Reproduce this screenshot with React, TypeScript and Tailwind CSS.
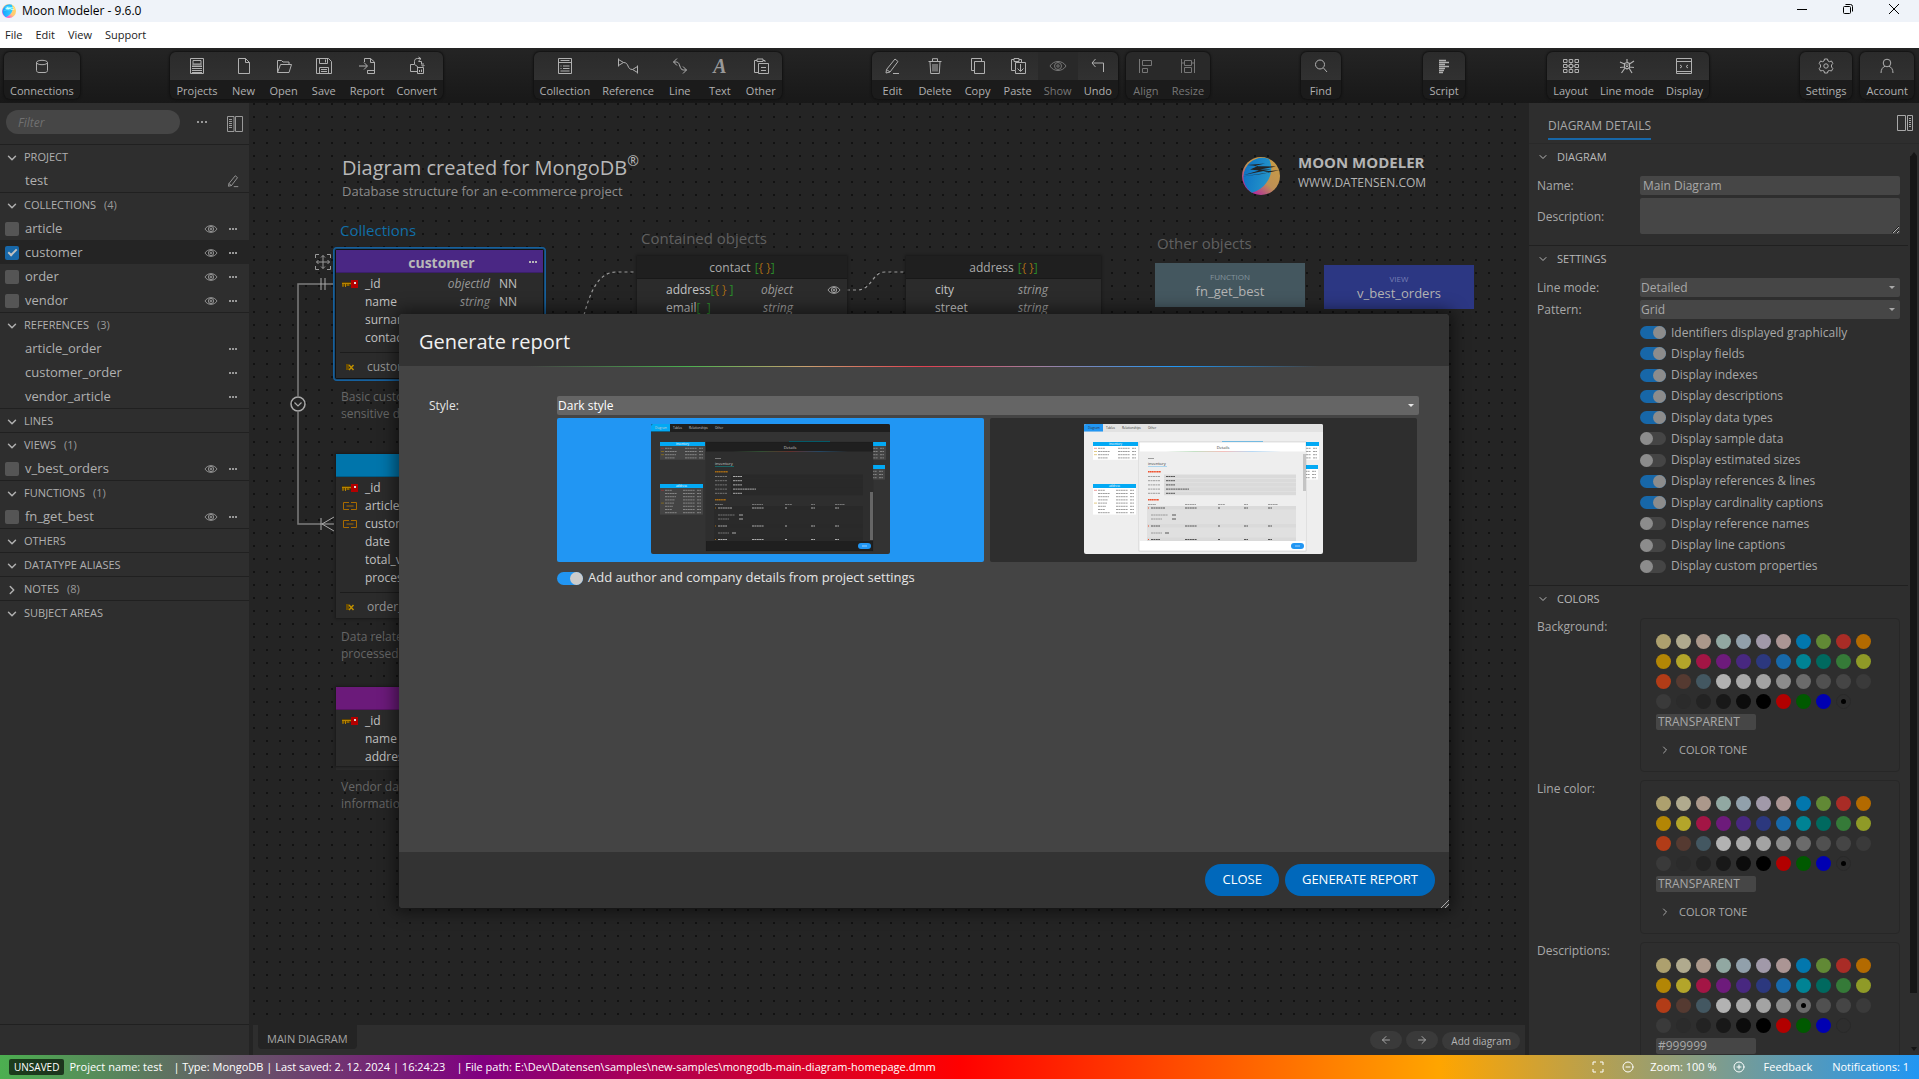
import type { ReactNode } from 'react';
import { ArrowLeft, ArrowRight, ChevronDown, ChevronRight, CircleMinus, CirclePlus } from 'lucide-react';

const ICONS: Record<string, ReactNode> = {
  connections: <><ellipse cx="8" cy="4.5" rx="5.5" ry="2.2" /><path d="M2.500 4.500v8c0 1.200 1.200 2 2.500 2h6c1.300 0 2.500-.8 2.500-2v-8" /></>,
  projects: <><path d="M1.500.500h13v15h-13zM4 2.500h8v3.500H4zM3 8.500h10M3 10.500h10M3 12.500h10M3 14.500h10M3 7h10" /></>,
  new: <path d="M2.500.500h7l4 4v11h-11zM9.500.500v4h4" />,
  open: <path d="M1.500 14.500v-12h4l1.500 1.500h6v3M1.500 14.500l3-8h11l-2.500 8z" />,
  save: <path d="M.500.500h12l3 3v12H.500zM3.500.500v5h8v-5M9.500 1.500v3M3.500 15.500v-6h9v6M5 11.500h6M5 13.500h6" />,
  report: <path d="M5.500 4V.500h6l4 3.500v11.500h-7v-3h7M11.500.500v4h4M0 8h8M5 4.500L8.500 8 5 11.500M8.500 12.500V15" />,
  convert: <path d="M5.500 6V3.500c0-2 1-3 3-3h3M9.500-1L12 .7 9.500 3M9.500 3.500h3v3M1.500 6.500h4l3 2v5h-7zM8.500 9.500h6v6h-6zM10.500 12v2M12.500 11.500V14M14 5v3M12.500 7l1.500 1.500L15.500 7" />,
  collection: <path d="M1.500.500h13v15h-13zM1.500 4.500h13M3.500 2.500h9M3.500 8h1M6 8h6.500M3.500 10.500h1M6 10.500h6.500M3.500 13h9" />,
  reference: <path d="M-1.500.500v8M-1.500 1.500l5 3-5 3M3.500 4.500c6 0 3 7 9 7M17.500 7.500v8M17.500 8.500l-5 3 5 3" />,
  line: <path d="M5 .500L1.500 4 5 7.500M1.500 4h3c4 0 2.500 8 7 8h3M11 8.500l3.500 3.500-3.500 3.500" />,
  other: <path d="M5 14.500H1.500v-12H4M10 2.500h2V4M4 1h6v2.500H4zM5.500 5.500h10v10h-10zM8 9.500h5M8 12.500h5" />,
  edit: <path d="M2.500 11.500L11 1l3 2.500L6 14l-4 1zM2.500 11.500L6 14M9 15.500h6" />,
  delete: <path d="M1.500 3.500h13M5.500 3V.700h5V3M3 4l.7 11.500h8.600L13 4M6 6v7.500M8 6v7.500M10 6v7.500" />,
  copy: <path d="M4.500 12.500h-3v-12h10v3M4.500 3.500h10v12h-10z" />,
  paste: <path d="M5 12.500H1.500v-11H4M9 1.500h2.500v3M4 .500h5v3H4zM5.500 12.500v-8h10v11h-10v-3M10.500 6v7M7.500 10.500l3 3 3-3" />,
  eye: <><path d="M0 8c3.500-6 12.500-6 16 0-3.500 6-12.500 6-16 0z" /><circle cx="8" cy="8" r="3.500" /><circle cx="8" cy="8" r="1.200" /></>,
  undo: <path d="M5.500 1L2 5l3.500 4M2 5h11.500v9" />,
  align: <path d="M1.500 1v14M4.500 2.500h9v5h-9zM4.500 10.500h5v4h-5z" />,
  resize: <path d="M1.500 1v14M14.500 1v14M4.500 2.500h7v5h-7zM4.500 9.500h7v5h-7zM1.500 5h3M11.500 5h3" />,
  find: <><circle cx="7" cy="6.500" r="4.500" /><path d="M10.500 10l3.500 4" /></>,
  script: <path d="M3 2.500h7M3 4.500h10M3 6.500h6M3 8.500h10M3 10.500h6M3 12.500h5M3 14.500h4" strokeWidth="1.300" />,
  layout: <path d="M.500 1.500h3.500v3H.500zM6.200 1.500h3.500v3H6.200zM12 1.500h3.500v3H12zM.500 6.500h3.500v3H.500zM6.200 6.500h3.500v3H6.200zM12 6.500h3.500v3H12zM.500 11.500h3.500v3H.500zM6.200 11.500h3.500v3H6.200zM12 11.500h3.500v3H12zM4 8h2M10 8h2M8 4.500v2M8 9.500v2" />,
  lineMode: <path d="M5.500 5.500l2.500-1 2.500 1v4L8 11 5.500 9.500zM8 1v3.500M5.500 6L1 4M10.500 6L15 3M5.500 9L1 9.500M10.500 9l4.500.5M6 10l-3.500 5M10 10l3 5M6.500 7h3M7 8.500h2" strokeWidth="1.200" />,
  display: <path d="M.500.500h15v15H.500zM.500 3.500h15M.500 13.500h15M4 7l2 1.500L4 10M12 7l-2 1.500 2 1.500" />,
  settings: <><circle cx="8" cy="8" r="2.200" /><path d="M6.500 1h3l.5 2 1.500.7 2-.7 1.300 2.500-1.300 1.500v2l1.300 1.500-1.300 2.500-2-.5L10 13l-.5 2h-3L6 13l-1.500-.5-2 .5-1.300-2.500L2.500 9V7L1.200 5.500 2.500 3l2 .7L6 3z" /></>,
  account: <><circle cx="8" cy="5" r="3.800" /><path d="M2 15c0-4 2-6 4-6.700M14 15c0-4-2-6-4-6.700" /></>,
  move: <path d="M8 1.500v13M1.500 8h13M6 3.500l2-2 2 2M6 12.500l2 2 2-2M3.500 6l-2 2 2 2M12.500 6l2 2-2 2M.500 4V.500H4M12 .500h3.500V4M.500 12v3.500H4M12 15.500h3.500V12" />,
  panelLeft: <path d="M.500.500h6.500v15H.500zM8.500.500h7v15h-7zM2 3.500h3M2 5.500h3M2 7.500h3M2 9.500h3M2 11.500h3" />,
  panelRight: <path d="M.500.500h8v15h-8zM10.500.500h5v15h-5zM12 3.500h2M12 5.500h2M12 7.500h2M12 9.500h2M12 11.500h2" />,
  full: <path d="M3 6V3h3M10 3h3v3M3 10v3h3M10 13h3v-3" />,
};

function Icon({ name, className = 'size-4' }: { name: string; className?: string }) {
  return (
    <svg viewBox="0 0 16 16" className={`shrink-0 overflow-visible ${className}`} fill="none" stroke="currentColor" strokeWidth="1" aria-hidden="true">
      {ICONS[name]}
    </svg>
  );
}

function MoonLogo({ className, cut }: { className: string; cut: string }) {
  return (
    <svg viewBox="0 0 38 38" className={className} aria-hidden="true">
      <defs>
        <linearGradient id="moonWarm" x1="0.2" y1="1" x2="0.9" y2="0.2">
          <stop offset="0.1" stopColor="#b32d9b" />
          <stop offset="0.5" stopColor="#bd9055" />
          <stop offset="1" stopColor="#c79a46" />
        </linearGradient>
        <linearGradient id="moonBlue" x1="0" y1="0" x2="1" y2="0.3">
          <stop offset="0" stopColor="#0b6fc4" />
          <stop offset="1" stopColor="#2494c9" />
        </linearGradient>
      </defs>
      <circle cx="19" cy="19" r="19" fill="url(#moonWarm)" />
      <path d="M27 2C33 14 27 30 10 35.700A19 19 0 0 1 27 2z" fill="url(#moonBlue)" />
      <path d="M5 8l18-1.500-11 2.500 22 .5-16 3 11 0L2 18l15-4.500-9-1L16 9z" fill={cut} />
      <path d="M0 19.500l20-2.500 18-4-17 1.500 6 1z" fill={cut} />
    </svg>
  );
}

type Tool = { label: string; icon: string; dim?: boolean };

function ToolGroup({ tools }: { tools: Tool[] }) {
  return (
    <div className="flex overflow-hidden rounded-md bg-[#1b1b1b] shadow-[0_0_2px_1px_#111]">
      {tools.map((t) => (
        <button key={t.label} type="button" className={`flex min-w-10 flex-col items-center text-[11px] leading-4 ${t.dim ? 'text-[#777]' : 'text-[#b0b0b0]'}`}>
          <span className={`flex h-7 w-full items-center justify-center ${t.dim ? 'bg-[#292929]' : 'bg-linear-to-b from-[#2b2b2b] to-[#313131]'}`}>
            {t.icon === 'text' ? (
              <span className="font-['Liberation_Serif',serif] text-[20px] leading-7 font-bold text-[#999] italic">A</span>
            ) : (
              <Icon name={t.icon} />
            )}
          </span>
          <span className="px-[6px] pt-[3px]">{t.label}</span>
        </button>
      ))}
    </div>
  );
}

function Toolbar() {
  return (
    <div className="flex h-[55px] shrink-0 items-start justify-between bg-linear-to-b from-[#242424] to-[#181818] pt-1">
      <div className="mx-1"><ToolGroup tools={[{ label: 'Connections', icon: 'connections' }]} /></div>
      <div className="mx-1">
        <ToolGroup
          tools={[
            { label: 'Projects', icon: 'projects' },
            { label: 'New', icon: 'new' },
            { label: 'Open', icon: 'open' },
            { label: 'Save', icon: 'save' },
            { label: 'Report', icon: 'report' },
            { label: 'Convert', icon: 'convert' },
          ]}
        />
      </div>
      <div className="mx-1">
        <ToolGroup
          tools={[
            { label: 'Collection', icon: 'collection' },
            { label: 'Reference', icon: 'reference' },
            { label: 'Line', icon: 'line' },
            { label: 'Text', icon: 'text' },
            { label: 'Other', icon: 'other' },
          ]}
        />
      </div>
      <div className="mx-1 flex gap-2">
        <ToolGroup
          tools={[
            { label: 'Edit', icon: 'edit' },
            { label: 'Delete', icon: 'delete' },
            { label: 'Copy', icon: 'copy' },
            { label: 'Paste', icon: 'paste' },
            { label: 'Show', icon: 'eye', dim: true },
            { label: 'Undo', icon: 'undo' },
          ]}
        />
        <ToolGroup tools={[{ label: 'Align', icon: 'align', dim: true }, { label: 'Resize', icon: 'resize', dim: true }]} />
      </div>
      <div className="ml-1"><ToolGroup tools={[{ label: 'Find', icon: 'find' }]} /></div>
      <ToolGroup tools={[{ label: 'Script', icon: 'script' }]} />
      <div className="mr-1">
        <ToolGroup tools={[{ label: 'Layout', icon: 'layout' }, { label: 'Line mode', icon: 'lineMode' }, { label: 'Display', icon: 'display' }]} />
      </div>
      <div className="mr-[5px] ml-1 flex gap-2">
        <ToolGroup tools={[{ label: 'Settings', icon: 'settings' }]} />
        <ToolGroup tools={[{ label: 'Account', icon: 'account' }]} />
      </div>
    </div>
  );
}

type TreeSection = { title: string; count?: number; closed?: boolean; items?: string[]; kind?: 'object' | 'ref' | 'project' };

const TREE: TreeSection[] = [
  { title: 'PROJECT', items: ['test'], kind: 'project' },
  { title: 'COLLECTIONS', count: 4, items: ['article', 'customer', 'order', 'vendor'], kind: 'object' },
  { title: 'REFERENCES', count: 3, items: ['article_order', 'customer_order', 'vendor_article'], kind: 'ref' },
  { title: 'LINES' },
  { title: 'VIEWS', count: 1, items: ['v_best_orders'], kind: 'object' },
  { title: 'FUNCTIONS', count: 1, items: ['fn_get_best'], kind: 'object' },
  { title: 'OTHERS' },
  { title: 'DATATYPE ALIASES' },
  { title: 'NOTES', count: 8, closed: true },
  { title: 'SUBJECT AREAS' },
];

function Dots({ className = 'gap-[2px]' }: { className?: string }) {
  return (
    <span className={`flex items-center ${className}`}>
      <i className="size-[2px] bg-current" />
      <i className="size-[2px] bg-current" />
      <i className="size-[2px] bg-current" />
    </span>
  );
}

function Sidebar() {
  return (
    <aside className="flex w-[249px] shrink-0 flex-col bg-[#2e2e2e] text-[#b0b0b0]">
      <div className="flex h-[41px] items-start pt-[7px] pl-[6px]">
        <input
          type="text"
          aria-label="Filter"
          placeholder="Filter"
          className="h-6 w-[174px] rounded-full bg-[#464646] px-3 text-[12px] italic outline-none placeholder:text-[#707070]"
        />
        <button type="button" aria-label="More" className="ml-4 flex h-6 w-3 items-center justify-center text-[#999]"><Dots /></button>
        <button type="button" aria-label="Toggle panel" className="ml-[19px] flex h-7 items-center text-[#999]"><Icon name="panelLeft" /></button>
      </div>
      <nav className="flex-1">
        {TREE.map((s) => (
          <section key={s.title} className="border-t border-[#202020]">
            <button type="button" className="flex h-[23px] w-full items-center pt-[2px] pl-[5px] text-[11px]">
              {s.closed ? <ChevronRight className="size-[14px]" strokeWidth={2.500} /> : <ChevronDown className="size-[14px]" strokeWidth={2.500} />}
              <span className="ml-[5px]">{s.title}</span>
              {s.count !== undefined && <span className="ml-2 text-[#999]">({s.count})</span>}
            </button>
            {s.items?.map((item) => (
              <div key={item} className={`flex h-6 items-center pt-px pl-[5px] text-[13px] ${item === 'customer' ? 'bg-[#242424]' : ''}`}>
                {s.kind === 'object' ? (
                  <label className="flex flex-1 items-center gap-[6px]">
                    <input
                      type="checkbox"
                      defaultChecked={item === 'customer'}
                      className="relative size-[14px] appearance-none rounded-xs bg-[#555] checked:bg-[#1767a8] checked:after:absolute checked:after:top-px checked:after:left-[5px] checked:after:h-[9px] checked:after:w-[5px] checked:after:rotate-45 checked:after:border-r-2 checked:after:border-b-2 checked:after:border-[#c0c0c0]"
                    />
                    {item}
                  </label>
                ) : (
                  <span className="flex-1 pl-5">{item}</span>
                )}
                {s.kind === 'project' ? (
                  <button type="button" aria-label="Edit project" className="mr-[10px]"><Icon name="edit" className="size-3" /></button>
                ) : (
                  <>
                    {s.kind === 'object' && (
                      <button type="button" aria-label={`Show ${item}`} className="mr-3"><Icon name="eye" className="size-3" /></button>
                    )}
                    <button type="button" aria-label={`More ${item}`} className="mr-3 text-[#999]"><Dots className="gap-px" /></button>
                  </>
                )}
              </div>
            ))}
          </section>
        ))}
      </nav>
      <div className="h-[31px] border-t border-[#202020]" />
    </aside>
  );
}

type Field = { name: string; type?: string; nn?: boolean; icon?: 'key' | 'link' };

function FieldIcon({ icon }: { icon?: 'key' | 'link' | 'ix' }) {
  if (icon === 'key')
    return (
      <svg viewBox="0 0 16 8" className="h-2 w-4" aria-hidden="true">
        <path d="M0 2h10v3H8v1H0z" fill="#5e4300" />
        <path d="M0 3.500h10M1 3v4M3.500 3v4M6 3v3" stroke="#b98400" fill="none" />
        <path d="M9 0h7v8H9z" fill="#b30000" />
        <path d="M12 2h2v2h-2z" fill="#ddd" />
      </svg>
    );
  if (icon === 'link')
    return (
      <svg viewBox="-1 0 16 8" className="h-2 w-4" fill="none" stroke="#a86a00" aria-hidden="true">
        <path d="M6 .500H.500v7H6M8 .500h5.500v7H8M3.500 4h7" />
      </svg>
    );
  if (icon === 'ix')
    return (
      <svg viewBox="0 0 10 8" className="h-2 w-[10px]" aria-hidden="true">
        <path d="M1 1h3v6H1z" fill="#6b4d00" />
        <path d="M4 2l4.500 5M8.500 2L4 7" stroke="#c09000" strokeWidth="1.500" />
      </svg>
    );
  return null;
}

function Entity({ title, header, fields, index, titleClass }: { title: ReactNode; header: string; fields: Field[]; index?: string; titleClass: string }) {
  return (
    <div className="bg-[#2b2b2b] text-[12px] text-[#c2c2c2] shadow-[0_0_2px_1px_#1a1a1a]">
      <div className={`relative flex h-[23px] items-center justify-center border-b border-black/20 pt-[2px] pl-1 ${header} ${titleClass}`}>{title}</div>
      <div className="pt-[2px]">
        {fields.map((f) => (
          <div key={f.name} className="flex h-[18px] items-center pl-[6px]">
            <span className="flex w-[23px] items-center"><FieldIcon icon={f.icon} /></span>
            <span className="flex-1">{f.name}</span>
            {f.type && <span className="text-[#999] italic">{f.type}</span>}
            {f.type && <span className="w-[53px] pl-[9px]">{f.nn ? 'NN' : ''}</span>}
          </div>
        ))}
      </div>
      {index && (
        <div className="mx-1 mt-[5px] flex h-[26px] items-center border-t border-[#1c1c1c] pt-[3px] text-[#999]">
          <span className="w-[27px] pl-[5px]"><FieldIcon icon="ix" /></span>
          {index}
        </div>
      )}
    </div>
  );
}

const Brackets = ({ spaced }: { spaced?: boolean }) => (
  <>
    <span className="text-[#2a8a2a]">[</span>
    <span className="text-[#a56a14]">{'{ }'}</span>
    <span className="text-[#2a8a2a]">{spaced ? '\u00a0]' : ']'}</span>
  </>
);

function NestedEntity({ title, rows, pad }: { title: string; rows: { name: ReactNode; type: string; eye?: boolean }[]; pad: string }) {
  return (
    <div className="bg-[#2b2b2b] text-[12px] text-[#c2c2c2] shadow-[0_0_2px_1px_#1a1a1a]">
      <div className="flex h-[23px] items-center justify-center gap-1 border-b border-[#181818] bg-[#1f1f1f] pt-[2px] text-[#aaa]">
        {title} <span><Brackets /></span>
      </div>
      <div className="pt-[2px]">
        {rows.map((r, i) => (
          <div key={i} className={`flex h-[18px] items-center pl-[29px] ${pad}`}>
            <span className="flex-1">{r.name}</span>
            <span className="text-[#999] italic">{r.type}</span>
            {pad === 'pr-[7px]' && <span className="flex w-[47px] justify-end">{r.eye && <Icon name="eye" className="size-3" />}</span>}
          </div>
        ))}
      </div>
    </div>
  );
}

function Canvas() {
  return (
    <main className="flex min-w-0 flex-1 flex-col bg-[#242424] px-1">
      <div className="relative min-h-0 flex-1 overflow-hidden bg-[radial-gradient(circle_at_1px_1px,#121212_1px,transparent_1px)] bg-[length:13px_13px]">
        <h1 className="absolute top-[50px] left-[89px] text-[20px] leading-[30px] whitespace-nowrap text-[#b8b8b8]">
          Diagram created for MongoDB<sup className="top-[-9px] text-[14px]">®</sup>
        </h1>
        <p className="absolute top-[78px] left-[89px] text-[13px] leading-5 whitespace-nowrap text-[#8c8c8c]">Database structure for an e-commerce project</p>
        <h2 className="absolute top-[115px] left-[87px] text-[15px] leading-6 text-[#116fa8]">Collections</h2>
        <h2 className="absolute top-[123px] left-[388px] text-[15px] leading-6 whitespace-nowrap text-[#606060]">Contained objects</h2>
        <h2 className="absolute top-[128px] left-[904px] text-[15px] leading-6 whitespace-nowrap text-[#606060]">Other objects</h2>

        <div className="absolute top-[46px] left-[989px] flex items-center gap-[18px] text-[#b4b4b4]">
          <MoonLogo className="mt-2 size-[38px]" cut="#242424" />
          <div>
            <div className="text-[15px] leading-[21px] font-bold whitespace-nowrap">MOON MODELER</div>
            <div className="text-[12px] leading-[19px] whitespace-nowrap">WWW.DATENSEN.COM</div>
          </div>
        </div>

        <svg className="absolute inset-0 size-full" fill="none" stroke="#7c7c7c" strokeWidth="2" aria-hidden="true">
          <path d="M80 181H45V293M45 309v112h36" strokeWidth="1.500" />
          <path d="M68 175v12M72 175v12M68 415v12M81 414l-12 7 12 7" stroke="#aaa" strokeWidth="1" />
          <circle cx="45" cy="301" r="7" stroke="#aaa" strokeWidth="1.500" />
          <path d="M41.500 299.500l3.500 3.500 3.500-3.500" stroke="#aaa" strokeWidth="1.200" />
          <path d="M331 212c6-22 14-43 32-43h20M594 187h10c15 0 15-18 28-18h21" stroke="#999" strokeWidth="1.200" strokeDasharray="3 3" />
        </svg>

        <div className="absolute top-[151px] left-[62px] text-[#999]"><Icon name="move" /></div>

        <div className="absolute top-[144px] left-[80px] w-[213px] rounded-[4px] border-2 border-[#1767a8] bg-black p-px">
          <Entity
            title={<>customer<span className="absolute right-[6px]"><Dots className="gap-px" /></span></>}
            header="bg-[#4a2784]"
            titleClass="text-[14px] font-bold text-[#b8b8b8]"
            fields={[
              { name: '_id', type: 'objectId', nn: true, icon: 'key' },
              { name: 'name', type: 'string', nn: true },
              { name: 'surname', type: 'string', nn: true },
              { name: 'contact', type: 'object' },
            ]}
            index="customer_ix"
          />
        </div>
        <p className="absolute top-[285px] left-[88px] w-[200px] text-[12px] leading-[17px] text-[#666]">Basic customer data and<br />sensitive details</p>

        <div className="absolute top-[351px] left-[83px] w-[207px]">
          <Entity
            title="order"
            header="bg-[#0075ab]"
            titleClass="text-[14px] font-bold text-[#b8b8b8]"
            fields={[
              { name: '_id', type: 'objectId', nn: true, icon: 'key' },
              { name: 'article', type: 'objectId', icon: 'link' },
              { name: 'customer', type: 'objectId', icon: 'link' },
              { name: 'date', type: 'date' },
              { name: 'total_value', type: 'double' },
              { name: 'processed', type: 'bool' },
            ]}
            index="order_ix"
          />
        </div>
        <p className="absolute top-[525px] left-[88px] w-[200px] text-[12px] leading-[17px] text-[#666]">Data related to orders<br />processed online</p>

        <div className="absolute top-[584px] left-[83px] w-[207px] bg-[#2b2b2b] pb-1">
          <Entity
            title="vendor"
            header="bg-[#6b1a7a]"
            titleClass="text-[14px] font-bold text-[#b8b8b8]"
            fields={[
              { name: '_id', type: 'objectId', nn: true, icon: 'key' },
              { name: 'name', type: 'string' },
              { name: 'address', type: 'string' },
            ]}
          />
        </div>
        <p className="absolute top-[675px] left-[88px] w-[200px] text-[12px] leading-[17px] text-[#666]">Vendor data and contact<br />information</p>

        <div className="absolute top-[153px] left-[384px] w-[210px]">
          <NestedEntity
            title="contact"
            pad="pr-[7px]"
            rows={[
              { name: <>address<Brackets spaced /></>, type: 'object', eye: true },
              { name: <>email<span className="text-[#2a8a2a]">[ &nbsp;]</span></>, type: 'string' },
            ]}
          />
        </div>
        <div className="absolute top-[153px] left-[653px] w-[195px]">
          <NestedEntity title="address" pad="pr-[53px]" rows={[{ name: 'city', type: 'string' }, { name: 'street', type: 'string' }]} />
        </div>

        <div className="absolute top-[160px] left-[902px] flex h-11 w-[150px] flex-col items-center justify-center bg-[#44575f] pt-px text-[13px] text-[#b4b4b4]">
          <span className="text-[8px] leading-[10px] text-[#84959d]">FUNCTION</span>
          <span className="leading-[18px]">fn_get_best</span>
        </div>
        <div className="absolute top-[162px] left-[1071px] flex h-11 w-[150px] flex-col items-center justify-center bg-[#2c3783] pt-px text-[13px] text-[#b4b4b4]">
          <span className="text-[8px] leading-[10px] text-[#767eb4]">VIEW</span>
          <span className="leading-[18px]">v_best_orders</span>
        </div>
      </div>

      <div className="flex h-[30px] shrink-0 items-start bg-[#2e2e2e] pr-[5px] pl-[5px] text-[#a4a4a4]">
        <button type="button" className="h-6 rounded-b bg-[#242424] px-[9px] pt-1 text-[11px]">MAIN DIAGRAM</button>
        <div className="ml-auto flex gap-1 pt-[6px]">
          <button type="button" aria-label="Previous" className="flex h-[18px] w-8 items-center justify-center rounded-full bg-[#3a3a3a]"><ArrowLeft className="size-3" /></button>
          <button type="button" aria-label="Next" className="flex h-[18px] w-8 items-center justify-center rounded-full bg-[#3a3a3a]"><ArrowRight className="size-3" /></button>
          <button type="button" className="mt-px h-[18px] rounded-full bg-[#3a3a3a] px-[9px] text-[10px] leading-[19px] text-[#b4b4b4]">Add diagram</button>
        </div>
      </div>
    </main>
  );
}

function Toggle({ label, on, bright }: { label: string; on: boolean; bright?: boolean }) {
  return (
    <label className={`flex items-center gap-[5px] ${bright ? 'h-[22px] text-[13px] text-[#e6e6e6]' : 'h-[21px] text-[12px]'}`}>
      <input
        type="checkbox"
        defaultChecked={on}
        className={`h-[13px] w-[26px] shrink-0 appearance-none rounded-full bg-[#454545] before:block before:size-[13px] before:rounded-full checked:before:translate-x-[13px] ${bright ? 'before:bg-[#ccc] checked:bg-[#2196f3]' : 'before:bg-[#8c8c8c] checked:bg-[#1767a8]'}`}
      />
      {label}
    </label>
  );
}

const SWATCHES = [
  ['#ada06e', '#b0aa8e', '#ab988b', '#91a8a2', '#91a0ab', '#a199a9', '#ab9594', '#0277ad', '#618935', '#a92c26', '#b36a00'],
  ['#b38605', '#b3a52a', '#a31545', '#6d1b7b', '#482880', '#2c387e', '#1769aa', '#008394', '#00695f', '#357a38', '#8f9a27'],
  ['#b23c17', '#553a31', '#435761', '#b2b2b2', '#a9a9a9', '#a3a3a3', '#8c8c8c', '#6b6b6b', '#505050', '#454545', '#3a3a3a'],
  ['#3a3a3a', '#2b2b2b', '#232323', '#181818', '#0c0c0c', '#000000', '#b20000', '#005900', '#0000b2', 'transparent'],
];

function ColorPicker({ label, value, selected }: { label: string; value: string; selected: string }) {
  return (
    <div className="mb-2 flex">
      <span className="w-[103px] shrink-0 text-[12px] leading-[18px]">{label}</span>
      <div className="h-[154px] flex-1 rounded-[4px] border border-[#272727] px-[15px] pt-[15px]">
        {SWATCHES.map((row, i) => (
          <div key={i} className="mb-[5px] flex gap-[5px]">
            {row.map((c, j) => (
              <button
                key={j}
                type="button"
                aria-label={`${label} ${c}`}
                style={{ backgroundColor: c }}
                className={`flex size-[15px] items-center justify-center rounded-full ${c === 'transparent' ? 'border border-[#292929]' : ''}`}
              >
                {selected === c && <span className="size-[5px] rounded-full bg-black" />}
              </button>
            ))}
          </div>
        ))}
        <input
          type="text"
          aria-label={`${label} value`}
          defaultValue={value}
          className="mt-px block h-4 w-[100px] rounded-xs bg-[#464646] px-[2px] text-[12px] leading-4 outline-none"
        />
        <button type="button" className="mt-3 ml-[3px] flex items-center text-[11px] leading-4">
          <ChevronRight className="size-3" />
          <span className="ml-2">COLOR TONE</span>
        </button>
      </div>
    </div>
  );
}

function PanelHeader({ title }: { title: string }) {
  return (
    <button type="button" className="flex h-[26px] items-center text-[11px] text-[#b8b8b8]">
      <ChevronDown className="size-3" />
      <span className="ml-2">{title}</span>
    </button>
  );
}

function Dropdown({ id, value, options, className, label }: { id: string; value: string; options: string[]; className: string; label?: string }) {
  return (
    <div className="relative min-w-0 flex-1">
      <select id={id} defaultValue={value} aria-label={label} className={`block h-[19px] w-full appearance-none rounded-xs pl-px text-[12px] leading-[19px] outline-none ${className}`}>
        {options.map((o) => (
          <option key={o}>{o}</option>
        ))}
      </select>
      <span className="pointer-events-none absolute top-2 right-[5px] border-x-[3px] border-t-[3px] border-x-transparent border-t-current" />
    </div>
  );
}

const OPTIONS: [string, boolean][] = [
  ['Identifiers displayed graphically', true],
  ['Display fields', true],
  ['Display indexes', true],
  ['Display descriptions', true],
  ['Display data types', true],
  ['Display sample data', false],
  ['Display estimated sizes', false],
  ['Display references & lines', true],
  ['Display cardinality captions', true],
  ['Display reference names', false],
  ['Display line captions', false],
  ['Display custom properties', false],
];

function DetailsPanel() {
  return (
    <aside className="flex w-[390px] shrink-0 flex-col bg-[#2e2e2e] text-[#a8a8a8]">
      <div className="flex h-[41px] shrink-0 items-start justify-between border-b border-[#292929] pr-[6px] pl-[19px]">
        <button type="button" className="mt-3 h-[25px] border-b-2 border-[#1767a8] pb-[2px] text-[12px]">DIAGRAM DETAILS</button>
        <button type="button" aria-label="Toggle panel" className="mt-3"><Icon name="panelRight" /></button>
      </div>
      <div className="flex min-h-0 flex-1">
        <div className="min-w-0 flex-1 overflow-hidden text-[12px]">
          <section className="h-[102px] border-b border-[#202020] pr-2 pl-2">
            <PanelHeader title="DIAGRAM" />
            <div className="mt-[6px] flex h-[19px] items-center">
              <label htmlFor="name" className="w-[103px]">Name:</label>
              <input id="name" type="text" defaultValue="Main Diagram" className="h-[19px] min-w-0 flex-1 rounded-xs bg-[#464646] px-[3px] outline-none" />
            </div>
            <div className="mt-[3px] flex h-9 items-center">
              <label htmlFor="description" className="w-[103px] pt-px">Description:</label>
              <textarea id="description" className="h-9 min-w-0 flex-1 rounded-xs bg-[#464646] outline-none" />
            </div>
          </section>
          <section className="h-[340px] border-b border-[#202020] pr-2 pl-2">
            <PanelHeader title="SETTINGS" />
            <div className="mt-[6px] flex items-center">
              <label htmlFor="lineMode" className="w-[103px]">Line mode:</label>
              <Dropdown id="lineMode" value="Detailed" options={['Detailed', 'Simple']} className="bg-[#464646]" />
            </div>
            <div className="mt-[3px] flex items-center">
              <label htmlFor="pattern" className="w-[103px]">Pattern:</label>
              <Dropdown id="pattern" value="Grid" options={['Grid', 'None']} className="bg-[#464646]" />
            </div>
            <div className="mt-[3px] ml-[103px] flex h-[255px] flex-col justify-between">
              {OPTIONS.map(([label, on]) => (
                <Toggle key={label} label={label} on={on} />
              ))}
            </div>
          </section>
          <section className="px-2">
            <PanelHeader title="COLORS" />
            <div className="pt-[6px]">
              <ColorPicker label="Background:" value="TRANSPARENT" selected="transparent" />
              <ColorPicker label="Line color:" value="TRANSPARENT" selected="transparent" />
              <ColorPicker label="Descriptions:" value="#999999" selected="#6b6b6b" />
            </div>
          </section>
        </div>
        <div className="mr-[2px] flex w-[9px] flex-col items-center pt-1 pb-1 pl-[2px]">
          <span className="mt-1 border-x-[3px] border-b-[4px] border-x-transparent border-b-[#161616]" />
          <div className="w-[7px] basis-[837px] bg-[#161616]" />
          <span className="mt-auto border-x-[3px] border-t-[4px] border-x-transparent border-t-[#161616]" />
        </div>
      </div>
    </aside>
  );
}

function ReportPreview({ dark }: { dark: boolean }) {
  const c = dark
    ? { bg: '#333', bar: '#1e1e1e', card: '#444', modal: '#2e2e2e', frame: '#1f1f1f', text: '#ccc', soft: '#888', box: '#292929', accent: '#a56a14' }
    : { bg: '#eee', bar: '#e2e2e2', card: '#fff', modal: '#eee', frame: '#fff', text: '#333', soft: '#888', box: '#dadada', accent: '#f0512d' };
  const card = (x: number, y: number, w: number, rows: number, title: string) => (
    <g>
      <rect x={x} y={y} width={w} height={rows * 3.2 + 5} fill={c.card} />
      <rect x={x} y={y} width={w} height="4" fill="#03a9f4" />
      <text x={x + w / 2} y={y + 3.200} fontSize="3" fill="#fff" textAnchor="middle">{title}</text>
      {Array.from({ length: rows }, (_, i) => (
        <g key={i} stroke={c.text} strokeWidth="0.800" opacity="0.600">
          <path d={`M${x + 5} ${y + 6.300 + i * 3.200}h${7 + ((i * 5) % 6)}M${x + w - 20} ${y + 6.300 + i * 3.200}h12M${x + w - 6} ${y + 6.300 + i * 3.200}h4`} strokeDasharray="2 .4" />
          {(i === 0 || i === 4 || (rows < 5 && i < 3)) && <path d={`M${x + 1} ${y + 6.300 + i * 3.200}h3`} stroke={i ? '#c09000' : '#d03030'} />}
        </g>
      ))}
    </g>
  );
  return (
    <svg viewBox="0 0 239 130" className="h-[130px] w-[239px] rounded-xs" aria-hidden="true">
      <defs>
        <linearGradient id={dark ? 'lineDark' : 'lineLight'}>
          <stop offset="0" stopColor="#4caf50" stopOpacity="0" />
          <stop offset="0.250" stopColor="#4caf50" stopOpacity="0.500" />
          <stop offset="0.500" stopColor="#f44336" stopOpacity="0.500" />
          <stop offset="0.750" stopColor="#2196f3" stopOpacity="0.500" />
          <stop offset="1" stopColor="#2196f3" stopOpacity="0" />
        </linearGradient>
      </defs>
      <rect width="239" height="130" fill={c.bg} />
      <rect width="239" height="8" fill={c.bar} />
      <rect width="19" height="7.500" fill={dark ? '#03a9f4' : '#2196f3'} />
      <g fontSize="3" fill={c.text}>
        <text x="4" y="5">Diagram</text>
        <text x="22" y="5">Tables</text>
        <text x="38" y="5">Relationships</text>
        <text x="64" y="5">Other</text>
      </g>
      {card(9, 18, 45, 4, 'inventory')}
      {card(9, 60, 43, 8, 'address')}
      {card(193, 18, 42, 4, '')}
      {card(193, 41, 41, 3, '')}
      <path d="M138 17.500h41" stroke={dark ? '#05606f' : '#7cc6f0'} />
      <rect x="55" y="18" width="167" height="109" fill={c.frame} stroke="#000" strokeOpacity="0.200" strokeWidth="0.600" />
      <rect x="55" y="27.500" width="167" height="89.500" fill={c.modal} />
      <rect x="82" y="27" width="115" height="0.600" fill={dark ? 'url(#lineDark)' : 'url(#lineLight)'} />
      <text x="139" y="24.500" fontSize="4" fill={c.text} textAnchor="middle">Details</text>
      <path d="M64 34.500h6" stroke={c.soft} strokeWidth="0.800" />
      <text x="64" y="40.500" fontSize="4" fill={c.text}>inventory</text>
      <path d="M64 42.500h19" stroke={dark ? '#0e8a8a' : '#7cc6f0'} strokeWidth="0.600" />
      <path d="M64 47.800h13M64 75.800h11" stroke={c.accent} strokeWidth="1.400" strokeDasharray="1.500 .3" />
      {[0, 1, 2, 3, 4].map((i) => (
        <g key={i}>
          <rect x="80" y={50.500 + i * 4.200} width="132" height="3.900" fill={c.box} />
          <path d={`M64 ${52.500 + i * 4.200}h12`} stroke={c.soft} strokeWidth="0.800" strokeDasharray="2 .5" />
          <path d={`M82 ${52.500 + i * 4.200}h${i === 3 ? 23 : 9}`} stroke={c.text} strokeWidth="1" strokeDasharray="2 .4" opacity="0.800" />
        </g>
      ))}
      <path d="M64 80.500h8M101 80.500h11M134 80.500h7M160 80.500h4M184 80.500h10" stroke={c.soft} strokeWidth="0.800" strokeDasharray="2 .4" />
      <rect x="63" y="82" width="149" height="35" fill={c.box} opacity="0.700" />
      {[84, 102, 115.500].map((y) => (
        <g key={y}>
          <rect x="63" y={y - 2} width="149" height="3.500" fill={c.box} />
          <path d={`M67 ${y}h${y === 84 ? 14 : 9}M101 ${y}h12M134 ${y}h2M160 ${y}h4M184 ${y}h4`} stroke={c.text} strokeWidth="1" strokeDasharray="2 .4" opacity="0.800" />
          <path d={`M64 ${y}h1`} stroke={c.accent} />
        </g>
      ))}
      <path d="M67 91h17M67 95h11M67 109h11" stroke={c.soft} strokeWidth="0.800" strokeDasharray="2 .4" />
      <path d="M88 91h4M88 95h4M81 109h4" stroke={c.text} strokeWidth="1" opacity="0.800" />
      <rect x="219" y={dark ? 68 : 30} width="3" height={dark ? 48 : 37} fill={dark ? '#666' : '#c4c4c4'} />
      <rect x="207" y="119" width="13" height="6" rx="3" fill="#2196f3" />
      <path d="M211 122h5" stroke="#bfe0ff" strokeWidth="0.800" />
    </svg>
  );
}

function ReportDialog() {
  return (
    <div role="dialog" aria-label="Generate report" className="absolute top-[314px] left-[399px] flex h-[594px] w-[1050px] flex-col rounded-[4px] bg-[#444] text-[#e6e6e6] shadow-[0_0_16px_4px_rgba(0,0,0,0.5)]">
      <header className="h-[52px] rounded-t-[4px] bg-[#333] pt-[14px] pl-5">
        <h2 className="text-[20px] leading-[28px] text-[#f0f0f0]">Generate report</h2>
      </header>
      <div className="mx-auto h-px w-3/4 bg-[linear-gradient(90deg,transparent,#4caf50_20%,#c8a070_35%,#e04050_50%,#a080a0_65%,#2196f3_82%,transparent)]" />
      <div className="flex-1 pt-[29px] pr-[30px] pl-[30px]">
        <div className="flex items-center text-[12px]">
          <label htmlFor="style" className="w-[128px]">Style:</label>
          <Dropdown id="style" value="Dark style" options={['Dark style', 'Light style']} className="bg-[#656565] text-white" />
        </div>
        <div className="mt-[3px] mr-[2px] ml-[128px] grid grid-cols-2 gap-[6px]">
          <button type="button" aria-label="Dark style" className="flex h-[144px] items-start justify-center rounded-xs bg-[#2196f3] pt-[6px]"><ReportPreview dark /></button>
          <button type="button" aria-label="Light style" className="flex h-[144px] items-start justify-center rounded-xs bg-[#2e2e2e] pt-[6px]"><ReportPreview dark={false} /></button>
        </div>
        <div className="mt-[5px] ml-[128px]">
          <Toggle label="Add author and company details from project settings" on bright />
        </div>
      </div>
      <footer className="relative flex h-14 items-start justify-end gap-[6px] rounded-b-[4px] bg-[#333] pt-3 pr-[14px] text-[13px] text-white">
        <button type="button" className="h-8 rounded-full bg-[#0068bb] px-[17px]">CLOSE</button>
        <button type="button" className="h-8 rounded-full bg-[#0068bb] px-[17px]">GENERATE REPORT</button>
        <svg viewBox="0 0 8 8" className="absolute right-0 bottom-0 size-2" stroke="#aaa" aria-hidden="true">
          <path d="M0 8l8-8M4 8l4-4" />
        </svg>
      </footer>
    </div>
  );
}

function StatusBar() {
  return (
    <footer className="flex h-6 shrink-0 items-center bg-[linear-gradient(90deg,#4caf50,#800080_25%,#ff0000_50%,#ffa500_75%,#2196f3)] pr-[10px] pl-[9px] text-[11px] whitespace-nowrap text-white">
      <span className="rounded-xs bg-black/65 px-[5px] text-[10px] leading-4">UNSAVED</span>
      <span className="ml-[5px]">Project name: test</span>
      <span className="ml-[11px]">| Type: MongoDB | Last saved: 2. 12. 2024 | 16:24:23</span>
      <span className="ml-[11px]">| File path: E:\Dev\Datensen\samples\new-samples\mongodb-main-diagram-homepage.dmm</span>
      <div className="ml-auto flex items-center">
        <button type="button" aria-label="Fit"><Icon name="full" /></button>
        <button type="button" aria-label="Zoom out" className="ml-4"><CircleMinus className="size-3" strokeWidth={2} /></button>
        <span className="ml-4">Zoom: 100 %</span>
        <button type="button" aria-label="Zoom in" className="ml-4"><CirclePlus className="size-3" strokeWidth={2} /></button>
        <a href="#feedback" className="ml-[19px]">Feedback</a>
        <a href="#notifications" className="ml-5">Notifications: 1</a>
      </div>
    </footer>
  );
}

export default function App() {
  return (
    <div className="relative flex h-screen flex-col overflow-hidden bg-[#242424] font-['Open_Sans',sans-serif]">
      <div className="flex h-[22px] shrink-0 items-center bg-[#eff3f9] text-[12px] text-black">
        <MoonLogo className="ml-[2px] size-[14px] brightness-140" cut="#9fd4f5" />
        <span className="ml-[6px]">Moon Modeler - 9.6.0</span>
        <div className="mr-5 ml-auto flex items-center gap-9 pb-1">
          <button type="button" aria-label="Minimize"><svg viewBox="0 0 10 10" className="size-[10px]" stroke="currentColor"><path d="M0 5.500h10" /></svg></button>
          <button type="button" aria-label="Restore"><svg viewBox="0 0 10 10" className="size-[10px]" fill="none" stroke="currentColor"><rect x=".5" y="2.500" width="7" height="7" rx="1" /><path d="M2.500.500h5q2 0 2 2v5" /></svg></button>
          <button type="button" aria-label="Close"><svg viewBox="0 0 10 10" className="size-[10px]" stroke="currentColor"><path d="M0 0l10 10M10 0L0 10" /></svg></button>
        </div>
      </div>
      <div className="flex h-[26px] shrink-0 items-center gap-[13px] bg-white pl-[5px] text-[11px] text-[#222]">
        <button type="button">File</button>
        <button type="button">Edit</button>
        <button type="button">View</button>
        <button type="button">Support</button>
      </div>
      <Toolbar />
      <div className="flex min-h-0 flex-1">
        <Sidebar />
        <Canvas />
        <DetailsPanel />
      </div>
      <StatusBar />
      <ReportDialog />
    </div>
  );
}
